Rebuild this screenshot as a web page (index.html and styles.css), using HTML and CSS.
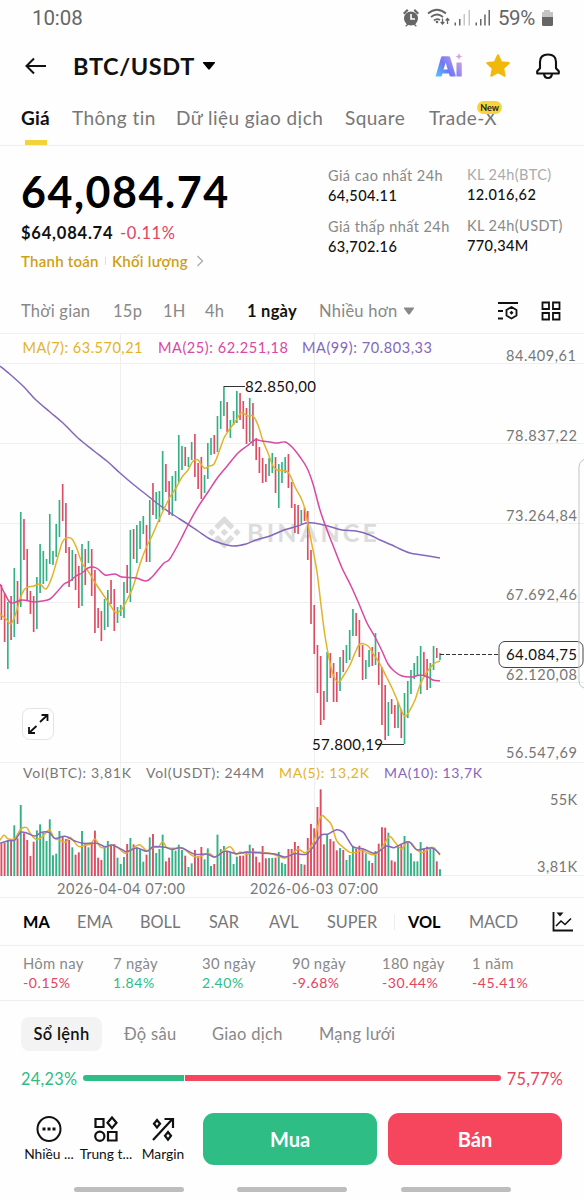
FILE: index.html
```html
<!DOCTYPE html>
<html lang="vi">
<head>
<meta charset="utf-8">
<title>BTC/USDT</title>
<link rel="stylesheet" href="styles.css">
</head>
<body>
<header class="status">
  <span class="clock">10:08</span>
  <svg class="status-icons" width="92" height="20" viewBox="0 0 92 20">
    <g fill="#666"><circle cx="9" cy="10.500" r="7"/><path d="M1 5 5 1l1.500 1.500L2.500 6.500zM17 5l-4-4-1.500 1.500 4 4zM3 18l3-3 1 1-2.500 2.500zM15 18l-3-3-1 1 2.500 2.500z"/></g>
    <path d="M9 6v5h4" stroke="#fff" stroke-width="1.600" fill="none"/>
    <g fill="none" stroke="#666" stroke-width="1.700"><path d="M26 5.500q9-7.500 18 0M29 9q6-5 12 0M32 12.500q3-2.500 6-.5"/></g>
    <circle cx="35" cy="14" r="1.300" fill="#666"/>
    <path d="M40.500 10.500v5m-1.800-1.500 1.800 2 1.800-2M45.500 16v-5m-1.800 1.500 1.800-2 1.800 2" stroke="#666" stroke-width="1.300" fill="none"/>
    <g fill="#666"><path d="M52.500 14.500h1.500v3h-1.500zM57 11h1.500v6.500h-1.500zM73.500 14.500h1.500v3h-1.500zM78 11h1.500v6.500h-1.500zM82.200 6.500h1.500v11h-1.500zM86.500 2h1.500v15.500h-1.500z"/></g>
    <path d="M61.500 6h1.500v11.500h-1.500zM66.500 2h1.500v15.500h-1.500z" fill="#c6c6c6"/>
  </svg>
  <span class="battery-text">59%</span>
  <svg class="battery" width="13" height="18" viewBox="0 0 13 18"><path d="M3 1h6v2h3v5H1V3h2z" fill="#c4c4c4"/><path d="M1 8h11v7.500q0 1.500-1.500 1.500h-8Q1 17 1 15.500z" fill="#666"/></svg>
</header>

<nav class="topbar">
  <svg width="24" height="20" viewBox="0 0 24 20" fill="none" stroke="#111" stroke-width="2"><path d="M22 10H3M10 2.500 2.500 10l7.500 7.500"/></svg>
  <h1 class="pair">BTC/USDT</h1>
  <svg width="14" height="10" viewBox="0 0 14 10"><path d="M1.500 1h11q1 0 .4 1L8 8q-1 1.300-2 0L1 2Q.5 1 1.500 1z"/></svg>
  <svg class="ai" width="28" height="28" viewBox="0 0 28 28">
    <defs><linearGradient id="aiFill" gradientUnits="userSpaceOnUse" x1="0" y1="25" x2="28" y2="4"><stop stop-color="#4fd0fa"/><stop offset=".4" stop-color="#6c78f5"/><stop offset=".65" stop-color="#a08cf0"/><stop offset="1" stop-color="#edb0cc"/></linearGradient></defs>
    <g fill="url(#aiFill)"><path fill-rule="evenodd" d="M.5 24.500 6 5.500q.4-1.300 1.500-1.300h6q1.300 0 1.700 1.300l5.500 18q.3 1-.8 1h-4.100q-1 0-1.300-1l-.5-2H7.500l-.6 2q-.3 1-1.300 1zM8.500 17.500h4.200l-2-7z"/><rect x="21.500" y="10.500" width="5.300" height="14" rx=".6"/><path d="m24 1 1 2.500 2.500 1-2.500 1L24 8l-1-2.500-2.500-1 2.500-1z"/></g>
  </svg>
  <svg width="26" height="26" viewBox="0 0 26 26"><path d="m13 2.200 3.200 7 7.600.9-5.600 5.200 1.500 7.500-6.700-3.700-6.700 3.700 1.500-7.500-5.600-5.200 7.600-.9z" fill="#f0b90b" stroke="#f0b90b" stroke-width="2" stroke-linejoin="round"/></svg>
  <svg width="26" height="28" viewBox="0 0 26 28" fill="none" stroke="#111" stroke-width="2.100" stroke-linejoin="round"><path d="M2.200 21.500v-2.300l2.800-3V10q0-7.500 8-7.500t8 7.500v6.200l2.800 3v2.300z"/><path d="M9 22q.5 4 4 4t4-4"/></svg>
</nav>

<nav class="tabs">
  <span class="tab on">Giá</span><span class="tab">Thông tin</span><span class="tab t3">Dữ liệu giao dịch</span><span class="tab">Square</span><span class="tab">Trade-X<b class="new">New</b></span>
</nav>

<section class="summary">
  <div class="last">
    <div class="price">64,084.74</div>
    <div class="fiat"><b>$64,084.74</b><span>-0.11%</span></div>
    <div class="tags"><span>Thanh toán</span><i></i><span>Khối lượng</span><svg width="8" height="12" viewBox="0 0 8 12" fill="none" stroke="#aaa" stroke-width="1.300"><path d="m1.500 1 5 5-5 5"/></svg></div>
  </div>
  <dl class="stats">
    <div><dt>Giá cao nhất 24h</dt><dd>64,504.11</dd></div>
    <div class="vol"><dt class="faint">KL 24h(BTC)</dt><dd>12.016,62</dd></div>
    <div><dt>Giá thấp nhất 24h</dt><dd>63,702.16</dd></div>
    <div class="vol"><dt>KL 24h(USDT)</dt><dd>770,34M</dd></div>
  </dl>
</section>

<nav class="frames">
  <span>Thời gian</span><span>15p</span><span>1H</span><span>4h</span><span class="on">1 ngày</span><span>Nhiều hơn</span>
  <svg width="12" height="8" viewBox="0 0 12 8"><path d="M1.500.5h9q1 0 .4 1L7 7Q6 8 5 7L1 1.500Q.5.500 1.500.5z" fill="#888"/></svg>
  <svg width="22" height="20" viewBox="0 0 22 20" fill="none" stroke="#111" stroke-width="1.800"><path d="M1 2h20M1 10h5M1 17.500h5M14.500 6l5 2.900v5.700l-5 2.900-5-2.900V8.900z"/><path d="m14.500 9.800 2 2-2 2-2-2z" fill="#111" stroke="none"/></svg>
  <svg width="20" height="20" viewBox="0 0 20 20" fill="none" stroke="#111" stroke-width="1.800"><path d="M1.500 1.500h6.500v6.500H1.500zM12 1.500h6.500v6.500H12zM1.500 12h6.500v6.500H1.500zM12 12h6.500v6.500H12z"/></svg>
</nav>

<svg class="chart" id="chart" width="584" height="565" viewBox="0 333 584 565">
  <path class="grid" d="M0 333.500H584M0 363.500H584M0 443.500H584M0 523.500H584M0 602.500H584M0 682.500H584M0 762.500H584M0 875.500H584M0 897.500H584M120.500 333V876M314.500 333V876"/>
  <g class="mark">
    <path transform="translate(208 516) scale(1.360)" d="M16.624 13.920l2.717 2.716-7.353 7.353-7.353-7.353 2.718-2.716 4.635 4.660zM21.260 9.284 24 12l-2.715 2.716L18.568 12zM11.988 9.285l2.717 2.691-2.717 2.718L9.272 12zM2.716 9.284 5.409 12l-2.692 2.692L0 12zM11.988.012l7.353 7.329-2.717 2.715-4.636-4.635-4.635 4.659-2.718-2.715z"/>
    <text x="247" y="542" textLength="130" font-size="25">BINANCE</text>
  </g>
  <g id="bars"></g>
  <g id="lines"></g>
  <path d="M224 386.500H245M382 744.500H404" stroke="#333"/>
  <path d="M440 654.500H499" stroke="#333" stroke-dasharray="4 2"/>
  <g class="legend">
    <text x="22.500" y="352.500" textLength="120" fill="#e2b329">MA(7): 63.570,21</text>
    <text x="158" y="352.500" textLength="130" fill="#d848a4">MA(25): 62.251,18</text>
    <text x="302" y="352.500" textLength="130" fill="#8567bb">MA(99): 70.803,33</text>
    <text class="vl" x="23" y="778" textLength="108">Vol(BTC): 3,81K</text>
    <text class="vl" x="146" y="778" textLength="118">Vol(USDT): 244M</text>
    <text class="vl ma5" x="279" y="778" textLength="90">MA(5): 13,2K</text>
    <text class="vl ma10" x="384" y="778" textLength="98">MA(10): 13,7K</text>
  </g>
  <g class="axis">
    <text x="506" y="361" textLength="70">84.409,61</text>
    <text x="506" y="441" textLength="71">78.837,22</text>
    <text x="506" y="521" textLength="71">73.264,84</text>
    <text x="506" y="600" textLength="71">67.692,46</text>
    <text x="506" y="679.500" textLength="71">62.120,08</text>
    <text x="506" y="758" textLength="71">56.547,69</text>
    <text x="550" y="805" textLength="27">55K</text>
    <text x="537" y="871.500" textLength="40">3,81K</text>
    <text x="57" y="894" textLength="128">2026-04-04 07:00</text>
    <text x="250" y="894" textLength="128">2026-06-03 07:00</text>
  </g>
  <rect x="499" y="641.500" width="84" height="26" rx="6" fill="#fff" stroke="#444"/>
  <path d="M590 458q-11 1-11 9v214q0 7 11 9" fill="none" stroke="#c4c4c4"/>
  <g class="price-label">
    <text x="245" y="392" textLength="71">82.850,00</text>
    <text x="312" y="750" textLength="71">57.800,19</text>
    <text x="506" y="660" textLength="71">64.084,75</text>
  </g>
  <rect x="22.500" y="708.500" width="31" height="31" rx="7" fill="#fff" stroke="#e2e2e2"/>
  <path d="m40 722 7.500-7m-6 0h6v6M36.500 726l-7.500 7m6 0h-6v-6" fill="none" stroke="#111" stroke-width="1.800"/>
</svg>

<nav class="indicators">
  <span class="on">MA</span><span>EMA</span><span>BOLL</span><span>SAR</span><span>AVL</span><span>SUPER</span><span class="on split">VOL</span><span>MACD</span>
  <svg width="22" height="22" viewBox="0 0 22 22" fill="none" stroke="#111" stroke-width="1.800"><path d="M1.500 1v18.500H21"/><path d="m4 15 5-5 4 3.500 6-6" stroke-width="1.600"/><path d="M4.500 1.500h7l-3.500 4z" fill="#111" stroke="none"/></svg>
</nav>

<section class="returns">
  <div>Hôm nay<b class="down">-0.15%</b></div><div>7 ngày<b class="up">1.84%</b></div><div>30 ngày<b class="up">2.40%</b></div><div>90 ngày<b class="down">-9.68%</b></div><div>180 ngày<b class="down">-30.44%</b></div><div>1 năm<b class="down">-45.41%</b></div>
</section>

<nav class="book"><span class="on">Sổ lệnh</span><span>Độ sâu</span><span>Giao dịch</span><span>Mạng lưới</span></nav>

<section class="ratio"><span class="up">24,23%</span><i class="bid" style="flex-grow:24.23"></i><i class="ask" style="flex-grow:75.77"></i><span class="down">75,77%</span></section>

<footer class="actions">
  <div class="action"><svg width="26" height="28" viewBox="0 0 26 28" fill="none" stroke="#111" stroke-width="2"><ellipse cx="13" cy="14" rx="11.500" ry="12"/><path d="M6.500 14h3m2 0h3m2 0h3" stroke-width="2.800"/></svg>Nhiều ...</div>
  <div class="action"><svg width="26" height="28" viewBox="0 0 26 28" fill="none" stroke="#111" stroke-width="2.200"><path d="M2.500 4h8v8h-8zM15 17h8.500v8.500H15zM19 2.500l4.500 5.300-4.500 5.300-4.500-5.300z"/><ellipse cx="6.800" cy="21.300" rx="4.600" ry="4.600"/></svg>Trung t...</div>
  <div class="action"><svg width="26" height="28" viewBox="0 0 26 28" fill="none" stroke="#111" stroke-width="2.200"><path d="M3 25 22 4.500M14.500 4h8.500v9M7 5l3 3.700-3 3.700-3-3.700zM18 17l3 3.800-3 3.800-3-3.800z"/></svg>Margin</div>
  <button class="trade buy">Mua</button>
  <button class="trade sell">Bán</button>
</footer>
<div class="handles"><i></i><i></i><i></i></div>
<script src="chart.js"></script>
</body>
</html>
```
FILE: styles.css
```css
* { box-sizing: border-box; }
body { margin: 0; width: 584px; height: 1200px; overflow: hidden; background: #fefefe; color: #111; font-family: Lato, "Noto Sans", sans-serif; display: flex; flex-direction: column; }
body > * { flex: none; }
svg { display: block; }
b, h1 { font-weight: 500; }
span { white-space: nowrap; }
.up { color: #2ebd85; }
.down { color: #e3445f; }

.status { height: 36px; padding: 0 30px 0 32px; display: flex; align-items: center; color: #666; font: 20.500px Roboto, sans-serif; }
.clock { flex: 1; letter-spacing: -.1px; }
.battery-text { width: 43px; letter-spacing: -.4px; margin-left: 4px; }

.topbar { height: 59px; padding: 0 24px 0 24px; display: grid; grid-template-columns: 49px 129px 233px 50px 50px 26px; align-items: center; }
.pair { margin: 0; font-size: 23.500px; font-weight: 700; letter-spacing: .6px; }

.tabs { height: 51px; padding: 0 0 5px 21px; display: grid; grid-template-columns: 51px 104px 169px 84px auto; align-items: center; border-bottom: 1px solid #eee; color: #777; font-size: 19px; }
.tab { position: relative; justify-self: start; letter-spacing: .45px; }
.tab.on { color: #111; font-weight: 700; letter-spacing: .2px; }
.tab.on::after { content: ""; position: absolute; left: 4px; bottom: -16px; width: 22px; height: 5px; background: #f3d33b; }
.new { position: absolute; right: -5px; top: -5px; padding: 0 3px; height: 13px; border-radius: 7px; background: #f8d33a; color: #222; font-size: 9px; line-height: 13px; letter-spacing: 0; font-weight: 700; }

.summary { height: 144px; padding: 20px 0 0 21px; display: grid; grid-template-columns: 307px auto; }
.price { font-size: 43px; font-weight: 700; line-height: 52px; letter-spacing: 1.550px; color: #000; }
.fiat { margin-top: 3px; display: grid; grid-template-columns: 99px auto; font-size: 16.500px; line-height: 24px; color: #e3445f; }
.fiat b { color: #111; font-weight: 700; letter-spacing: .8px; }
.fiat span { letter-spacing: .6px; }
.tags { margin-top: 6px; display: grid; grid-template-columns: 84px 7px 84px auto; align-items: center; color: #cf9f13; font-size: 15px; line-height: 20px; font-weight: 600; letter-spacing: .25px; }
.tags i { height: 8px; width: 1px; background: #ddd; }
.stats { margin: 0; display: grid; grid-template-columns: 139px auto; grid-template-rows: 51px 51px; font-size: 14.500px; line-height: 20px; white-space: nowrap; }
.stats .vol { margin-top: -1px; }
.stats dt { color: #888; letter-spacing: .43px; }
.stats .faint { color: #aaa; }
.stats dd { margin: 0; letter-spacing: .4px; font-weight: 500; }

.frames { height: 43px; padding: 0 0 2px 21px; display: grid; grid-template-columns: 92px 50px 42px 42px 72px 84px 94px 44px 20px; align-items: center; color: #888; font-size: 16.500px; letter-spacing: .25px; }
.frames .on { color: #111; font-weight: 700; }

.chart text { font-family: Lato, "Noto Sans", sans-serif; }
.grid { fill: none; stroke: #efefef; }
.mark { fill: #dcdcdc; font-weight: 700; }
.legend { font-size: 14.500px; }
.legend .vl { font-size: 14px; fill: #777; }
.legend .ma5 { fill: #e2b329; }
.legend .ma10 { fill: #8567bb; }
.axis { font-size: 14.500px; fill: #777; }
.price-label { font-size: 15px; fill: #111; }

.indicators { height: 48px; padding-left: 23px; display: grid; grid-template-columns: 54px 63px 69px 60px 58px 81px 61px 83px 22px; align-items: center; border-bottom: 1px solid #eee; color: #777; font-size: 16.300px; }
.indicators .on { color: #000; font-weight: 700; }
.indicators .split { position: relative; }
.indicators .split::before { content: ""; position: absolute; left: -14px; top: 2px; width: 1px; height: 16px; background: #eee; }

.returns { height: 55px; padding: 7px 0 0 23px; display: grid; grid-template-columns: 90px 89px 90px 90px 90px auto; border-bottom: 1px solid #eee; color: #888; font-size: 14.800px; line-height: 20px; letter-spacing: .3px; white-space: nowrap; }
.returns b { display: block; font-size: 14px; font-weight: 400; letter-spacing: .6px; }

.book { height: 66px; padding: 0 0 1px 21px; display: grid; grid-template-columns: 103px 88px 107px auto; align-items: center; color: #888; font-size: 16.500px; letter-spacing: .3px; }
.book .on { justify-self: start; width: 81px; height: 34px; border-radius: 8px; background: #f3f3f3; color: #111; font-weight: 600; line-height: 34px; text-align: center; }

.ratio { height: 22px; padding: 0 21px; display: flex; align-items: center; gap: 1px; font-size: 16.300px; letter-spacing: .3px; }
.ratio span { width: 61px; }
.ratio .down { text-align: right; }
.ratio i { flex-basis: 0; height: 6px; }
.bid { border-radius: 3px 0 0 3px; background: #2ebd85; }
.ask { border-radius: 0 3px 3px 0; background: #f6465d; }

.actions { height: 76px; margin-top: 24px; padding-left: 21px; display: grid; grid-template-columns: 57px 57px 68px 175px 175px; align-items: start; }
.action { width: 56px; margin-top: 2px; display: flex; flex-direction: column; align-items: center; gap: 2px; font: 13.800px/18px Lato, sans-serif; white-space: nowrap; }
.trade { height: 52px; width: 174px; border: 0; border-radius: 11px; color: #fff; font: 700 20px Lato, sans-serif; }
.buy { background: #2ebd85; }
.sell { margin-left: 10px; background: #f6465d; }
.handles { display: grid; grid-template-columns: 163px 164px 110px; padding-left: 74px; margin-top: -2px; }
.handles i { width: 110px; height: 5px; border-radius: 3px; background: #bdbdbd; }
```
FILE: chart.js
```js
// One entry per day: direction, high y, low y, volume top (in thirds of a pixel below 760)
const days = `r 585 620 250|r 593 642 248|g 602 669 240|r 596 640 240|g 568 637 196|r 581 624 235|g 512 607 135|r 519 560 220|r 549 600 240|r 591 614 288|r 596 632 245|g 577 629 211|g 544 593 193|g 551 584 218|g 559 581 243|g 514 564 178|g 551 565 286|g 524 557 281|g 500 537 213|r 484 521 230|r 503 553 237|r 547 587 240|g 550 581 262|r 554 590 284|r 566 608 277|g 544 606 213|r 549 585 250|g 541 563 262|r 549 596 250|r 570 633 212|r 608 628 293|r 611 641 300|g 599 630 260|g 590 627 243|r 580 604 258|r 589 631 252|g 607 623 293|g 605 616 312|g 582 618 291|r 565 593 252|g 530 602 234|r 529 559 253|g 525 563 262|g 521 549 268|g 516 534 305|r 525 562 284|g 500 562 232|r 483 515 222|g 492 519 279|g 491 522 267|g 451 510 224|r 464 492 304|r 481 515 293|g 476 516 267|g 471 501 272|g 435 482 254|g 446 470 270|r 447 466 287|g 457 467 321|g 442 460 310|r 434 477 270|r 463 489 289|r 457 499 261|g 475 493 298|g 443 479 265|g 438 455 318|r 435 454 312|g 416 452 224|g 401 429 267|g 386 416 258|r 402 432 272|g 420 438 276|g 411 425 312|g 391 423 290|r 393 420 287|r 401 429 287|r 408 444 275|g 398 442 254|r 403 446 265|r 438 460 290|r 447 473 307|r 458 483 258|r 464 482 295|g 458 476 294|g 453 473 294|r 457 493 293|g 464 508 276|g 462 483 308|g 457 473 312|r 454 488 267|r 482 508 267|r 504 533 246|r 505 534 258|g 510 524 312|r 508 521 314|r 511 560 234|r 550 624 192|r 605 654 205|r 645 693 141|r 656 725 88|r 691 720 253|g 652 702 222|r 653 678 237|r 663 702 244|r 672 702 271|g 657 691 264|r 650 672 270|g 645 663 300|g 630 660 285|g 609 636 260|r 613 636 266|r 620 657 257|r 645 680 268|g 660 679 280|g 650 667 302|r 647 666 309|g 633 665 273|r 652 685 251|r 667 725 202|r 685 740 203|g 702 736 218|r 699 714 301|r 705 728 305|g 702 728 258|r 709 738 255|g 693 744 228|g 681 718 248|g 670 694 280|g 663 679 304|g 656 675 304|g 646 694 246|r 652 675 266|r 659 690 260|g 663 688 266|g 646 670 262|r 648 658 304|g 653 660 328`;

let bars = "";
days.split("|").forEach((day, i) => {
  const [dir, high, low, vol] = day.split(" ");
  const x = 1.4 + 3.225 * i;
  const color = dir === "g" ? "#31b184" : "#df4b62";
  const top = 760 + vol / 3;
  bars += `<path d="M${x} ${high}V${low}" stroke="${color}" stroke-width="1.650"/>`;
  bars += `<path d="M${x} ${top}V876" stroke="${color}" stroke-width="1.900"/>`;
});
document.getElementById("bars").innerHTML = bars;

function curve(points) {
  let d = `M${points[0]}`;
  for (let i = 0; i < points.length - 1; i++) {
    const p0 = points[Math.max(i - 1, 0)], p1 = points[i], p2 = points[i + 1], p3 = points[Math.min(i + 2, points.length - 1)];
    d += `C${p1[0] + (p2[0] - p0[0]) / 6} ${p1[1] + (p2[1] - p0[1]) / 6} ${p2[0] - (p3[0] - p1[0]) / 6} ${p2[1] - (p3[1] - p1[1]) / 6} ${p2[0]} ${p2[1]}`;
  }
  return d;
}
const parse = s => s.split(" ").map(p => p.split(",").map(Number));
const parseVol = (a, b) => [
  ...parse(a).map(([x, y]) => [x / 3, 760 + y / 3]),
  ...parse(b).map(([x, y]) => [220 + x / 3, 760 + y / 3])
];

const series = [
  ["#8567bb", parse("0,366 12,376 24,387 36,400 50,412 63,423 78,438 94,451 108,462 120,473 134,485 148,496 158,504 172,514 186,523 198,531 210,539 220,543 233,546 246,544 256,540 270,536 284,530 298,526 306,523 314,523 328,526 342,530 356,531 370,535 380,540 392,545 400,549 410,553 422,555 440,558")],
  ["#e2b329", parse("0,614 6,619 11,624 16,613 20,599 24,590 28,587 34,586 40,584 46,589 52,577 57,560 62,543 66,538 72,539 77,549 82,563 88,571 94,581 102,593 109,603 115,612 121,610 127,600 133,587 140,564 146,548 152,536 158,522 164,509 170,497 176,488 182,477 188,470 193,461 198,460 204,468 209,466 214,464 220,449 224,438 229,430 235,422 240,414 243,413 248,416 253,416 258,425 263,441 268,453 273,466 277,470 286,471 290,475 295,487 301,498 305,509 308,525 312,545 317,572 321,605 325,636 330,663 334,677 339,682 344,675 350,665 355,653 360,644 368,646 374,655 380,664 386,676 392,688 398,702 403,714 406,716 410,710 415,700 420,685 425,675 430,668 435,663 440,661")],
  ["#d848a4", parse("0,584 5,594 11,603 22,600 34,602 42,601 50,599 57,592 64,584 70,581 76,576 82,573 88,568 93,567 98,569 105,575 115,574 122,577 136,578 146,581 152,577 158,570 164,563 169,560 174,552 181,539 189,523 198,507 208,492 218,477 228,465 238,453 247,446 255,440 262,441 270,442 277,443 285,442 292,447 300,457 307,468 313,484 320,510 327,530 334,548 342,568 351,586 359,604 367,623 375,637 382,651 388,664 394,671 402,676 412,677 420,675 428,677 433,680 440,681")],
  ["#e2b329", parseVol("0,241 12,226 25,237 45,235 62,208 80,203 90,219 108,238 125,232 148,210 162,234 178,240 198,247 210,232 235,259 255,256 272,252 285,237 300,260 312,263 340,255 360,268 375,280 392,270 418,254 440,272 460,262 475,261 488,245 500,262 520,265 548,265 570,282 592,292 625,280 645,291 665,277 690,260 708,283 720,276 740,283 760,275 790,278 810,280 840,290", "195,294 215,283 235,268 255,278 272,262 285,235 302,170 320,178 335,196 350,242 370,262 390,277 410,277 425,271 445,280 465,284 485,265 508,230 525,247 545,267 560,247 575,250 590,270 610,277 635,262 648,270 660,285")],
  ["#8567bb", parseVol("0,250 25,242 45,240 62,217 80,219 105,228 125,217 148,218 165,235 195,229 225,243 250,250 290,250 315,260 335,255 365,268 380,275 410,264 440,274 460,260 495,262 515,268 545,264 585,283 620,282 645,291 675,274 710,281 740,276 790,280 825,282", "195,291 225,281 258,283 280,260 303,226 325,222 350,209 370,217 385,240 400,261 430,267 462,280 480,272 500,258 522,263 545,252 568,246 590,269 620,265 640,265 660,283")]
];
document.getElementById("lines").innerHTML = series
  .map(([color, points]) => `<path d="${curve(points)}" fill="none" stroke="${color}" stroke-width="1.500"/>`)
  .join("");
```
